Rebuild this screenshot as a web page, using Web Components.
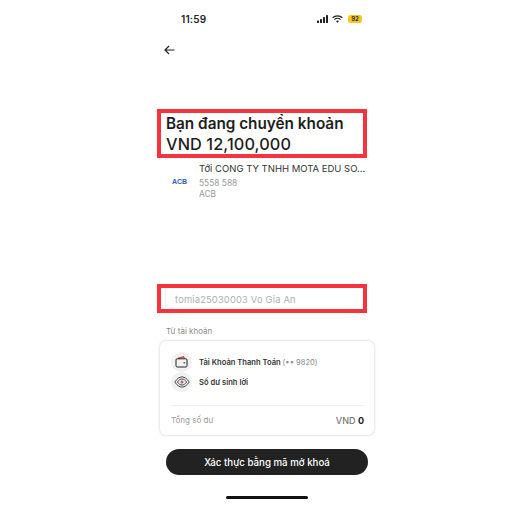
<!DOCTYPE html>
<html lang="vi">
<head>
<meta charset="utf-8">
<title>Chuyển khoản</title>
<style>
    html, body { margin: 0; background: #fff; }
    body { font-family: Inter, "Liberation Sans", sans-serif; color: #1f1f1f; }
</style>
</head>
<body>
<transfer-screen>
    <status-bar></status-bar>
    <back-nav></back-nav>
    <amount-heading></amount-heading>
    <recipient-row></recipient-row>
    <note-field>tomia25030003 Vo Gia An</note-field>
    <account-card></account-card>
    <confirm-button>Xác thực bằng mã mở khoá</confirm-button>
    <home-bar></home-bar>
</transfer-screen>

<script>
{
    const define = (name, template) => {
        customElements.define(name, class extends HTMLElement {
            constructor() {
                super();
                const shadowRoot = this.attachShadow({mode: 'open'});
                shadowRoot.innerHTML = template;
            }
        });
    };

    define('transfer-screen', `
        <style>
        :host {
            display: flex;
            flex-direction: column;
            width: 512px;
            height: 508px;
            box-sizing: border-box;
            padding: 0 145px 0 157px;
            overflow: hidden;
        }
        </style>
        <slot></slot>
    `);

    define('status-bar', `
        <style>
        :host {
            display: flex;
            align-items: center;
            justify-content: space-between;
            height: 18px;
            margin-top: 10px;
            padding: 0 5px 0 24px;
        }
        .time {
            font-size: 10px;
            font-weight: 600;
            letter-spacing: 0.2px;
            color: #222;
        }
        .icons {
            display: flex;
            align-items: center;
            gap: 3px;
        }
        .wifi { margin-right: 2px; }
        .battery {
            width: 14px;
            height: 8px;
            border-radius: 2.5px;
            background: #f7c81e;
            font-size: 6px;
            font-weight: 700;
            line-height: 8px;
            text-align: center;
            color: #333;
        }
        svg { display: block; }
        </style>
        <span class="time">11:59</span>
        <span class="icons">
            <svg width="12" height="8" viewBox="0 0 12 8" fill="#222">
                <rect x="0" y="5.5" width="2" height="2.5" rx=".5"/>
                <rect x="3" y="4" width="2" height="4" rx=".5"/>
                <rect x="6" y="2" width="2" height="6" rx=".5"/>
                <rect x="9" y="0" width="2" height="8" rx=".5"/>
            </svg>
            <svg class="wifi" width="11" height="8" viewBox="0 0 11 8" fill="none" stroke="#222" stroke-width="1.2">
                <path d="M.6 2.8a7 7 0 0 1 9.8 0"/>
                <path d="M2.4 4.6a4.4 4.4 0 0 1 6.2 0"/>
                <path d="M5.5 7.8 4 6.3a2.1 2.1 0 0 1 3 0z" fill="#222" stroke="none"/>
            </svg>
            <span class="battery">92</span>
        </span>
    `);

    define('back-nav', `
        <style>
        :host {
            display: block;
            height: 10px;
            margin-top: 17px;
            padding-left: 7px;
        }
        svg { display: block; }
        </style>
        <svg width="11" height="10" viewBox="0 0 11 10" fill="none" stroke="#222" stroke-width="1.2">
            <path d="M10.5 5H1M5 1 1 5l4 4"/>
        </svg>
    `);

    define('amount-heading', `
        <style>
        :host {
            display: block;
            height: 49px;
            box-sizing: border-box;
            margin-top: 54px;
            padding: 0 5px;
            border: 4px solid #f5333f;
            font-size: 15.3px;
            line-height: 21px;
            white-space: nowrap;
            color: #1d1d1d;
        }
        .title { font-weight: 600; }
        .amount { font-size: 16.3px; font-weight: 500; letter-spacing: 0.1px; }
        </style>
        <div class="title">Bạn đang chuyển khoản</div>
        <div class="amount">VND 12,100,000</div>
    `);

    define('recipient-row', `
        <style>
        :host {
            display: flex;
            align-items: center;
            margin-top: 5px;
            padding-left: 15px;
        }
        .logo {
            width: 27px;
            flex: none;
            font: 700 7px "Liberation Sans", sans-serif;
            color: #2f5cc0;
        }
        .name {
            font-size: 9.5px;
            line-height: 12px;
            white-space: nowrap;
            color: #333;
        }
        .meta {
            margin-top: 3px;
            font-size: 8.4px;
            line-height: 11px;
            color: #999;
        }
        </style>
        <span class="logo">ACB</span>
        <div>
            <div class="name">Tới CONG TY TNHH MOTA EDU SO...</div>
            <div class="meta">5558 588<br>ACB</div>
        </div>
    `);

    define('note-field', `
        <style>
        :host {
            display: flex;
            align-items: center;
            height: 29px;
            box-sizing: border-box;
            margin-top: 84px;
            padding-left: 4px;
            border: 4px solid #f5333f;
        }
        .inner {
            display: flex;
            align-items: center;
            height: 100%;
            box-sizing: border-box;
            padding: 2px 0 0 9px;
            border-left: 1px solid #eee;
            font-size: 9.3px;
            letter-spacing: 0.2px;
            color: #aeaeae;
        }
        </style>
        <div class="inner"><slot></slot></div>
    `);

    define('account-card', `
        <style>
        :host {
            display: block;
            margin-top: 13px;
        }
        .label {
            padding-left: 9px;
            font-size: 8px;
            line-height: 10px;
            color: #8a8a8a;
        }
        .card {
            margin: 5px 0 0 3px;
            width: 214px;
            height: 94px;
            box-sizing: border-box;
            padding: 11px 10px 0 11px;
            border-radius: 6px;
            background: #fff;
            box-shadow: 0 0 3px rgba(0, 0, 0, 0.22);
        }
        .row {
            display: flex;
            align-items: center;
            gap: 7px;
            height: 20px;
            font-size: 7.6px;
            font-weight: 600;
            color: #333;
        }
        .icon {
            display: flex;
            align-items: center;
            justify-content: center;
            width: 21px;
            height: 20px;
            flex: none;
            border-radius: 50%;
            background: #f1f1f1;
        }
        .suffix { font-weight: 400; color: #888; }
        .total {
            display: flex;
            align-items: center;
            justify-content: space-between;
            height: 28px;
            margin-top: 13px;
            border-top: 1px solid #eee;
            font-size: 8px;
            color: #999;
        }
        .balance { font-size: 9px; font-weight: 500; color: #777; }
        .balance b { color: #222; font-weight: 700; }
        svg { display: block; }
        </style>
        <div class="label">Từ tài khoản</div>
        <div class="card">
            <div class="row">
                <span class="icon">
                    <svg width="13" height="12" viewBox="0 0 13 12" fill="none" stroke="#222" stroke-width="1">
                        <path d="M3 2.5 8.5.8l1 1.7" stroke="#d8453f" stroke-width="1.4"/>
                        <rect x="1" y="2.8" width="11" height="8.2" rx="1.2"/>
                        <path d="M8.5 6.8h1.8"/>
                    </svg>
                </span>
                <span>Tài Khoản Thanh Toán <span class="suffix">(•• 9820)</span></span>
            </div>
            <div class="row">
                <span class="icon">
                    <svg width="16" height="12" viewBox="0 0 16 12" fill="none" stroke="#333" stroke-width=".9">
                        <path d="M.8 6C3 2.6 5.4.9 8 .9s5 1.7 7.2 5.1c-2.2 3.4-4.6 5.1-7.2 5.1S3 9.4.8 6z"/>
                        <path d="M3.4 6C4.8 4 6.3 3 8 3s3.2 1 4.6 3c-1.4 2-2.9 3-4.6 3S4.8 8 3.4 6z"/>
                        <circle cx="8" cy="6" r="1.5" fill="#b5616a" stroke="none"/>
                    </svg>
                </span>
                <span>Số dư sinh lời</span>
            </div>
            <div class="total">
                <span>Tổng số dư</span>
                <span class="balance">VND <b>0</b></span>
            </div>
        </div>
    `);

    define('confirm-button', `
        <style>
        :host {
            display: flex;
            align-items: center;
            justify-content: center;
            width: 202px;
            height: 26px;
            margin: 14px 0 0 9px;
            border-radius: 13px;
            background: #222;
            font-size: 9.7px;
            font-weight: 500;
            color: #fff;
        }
        </style>
        <slot></slot>
    `);

    define('home-bar', `
        <style>
        :host {
            display: block;
            width: 82px;
            height: 3px;
            margin: 21px 0 0 69px;
            border-radius: 2px;
            background: #111;
        }
        </style>
    `);
}
</script>
</body>
</html>
